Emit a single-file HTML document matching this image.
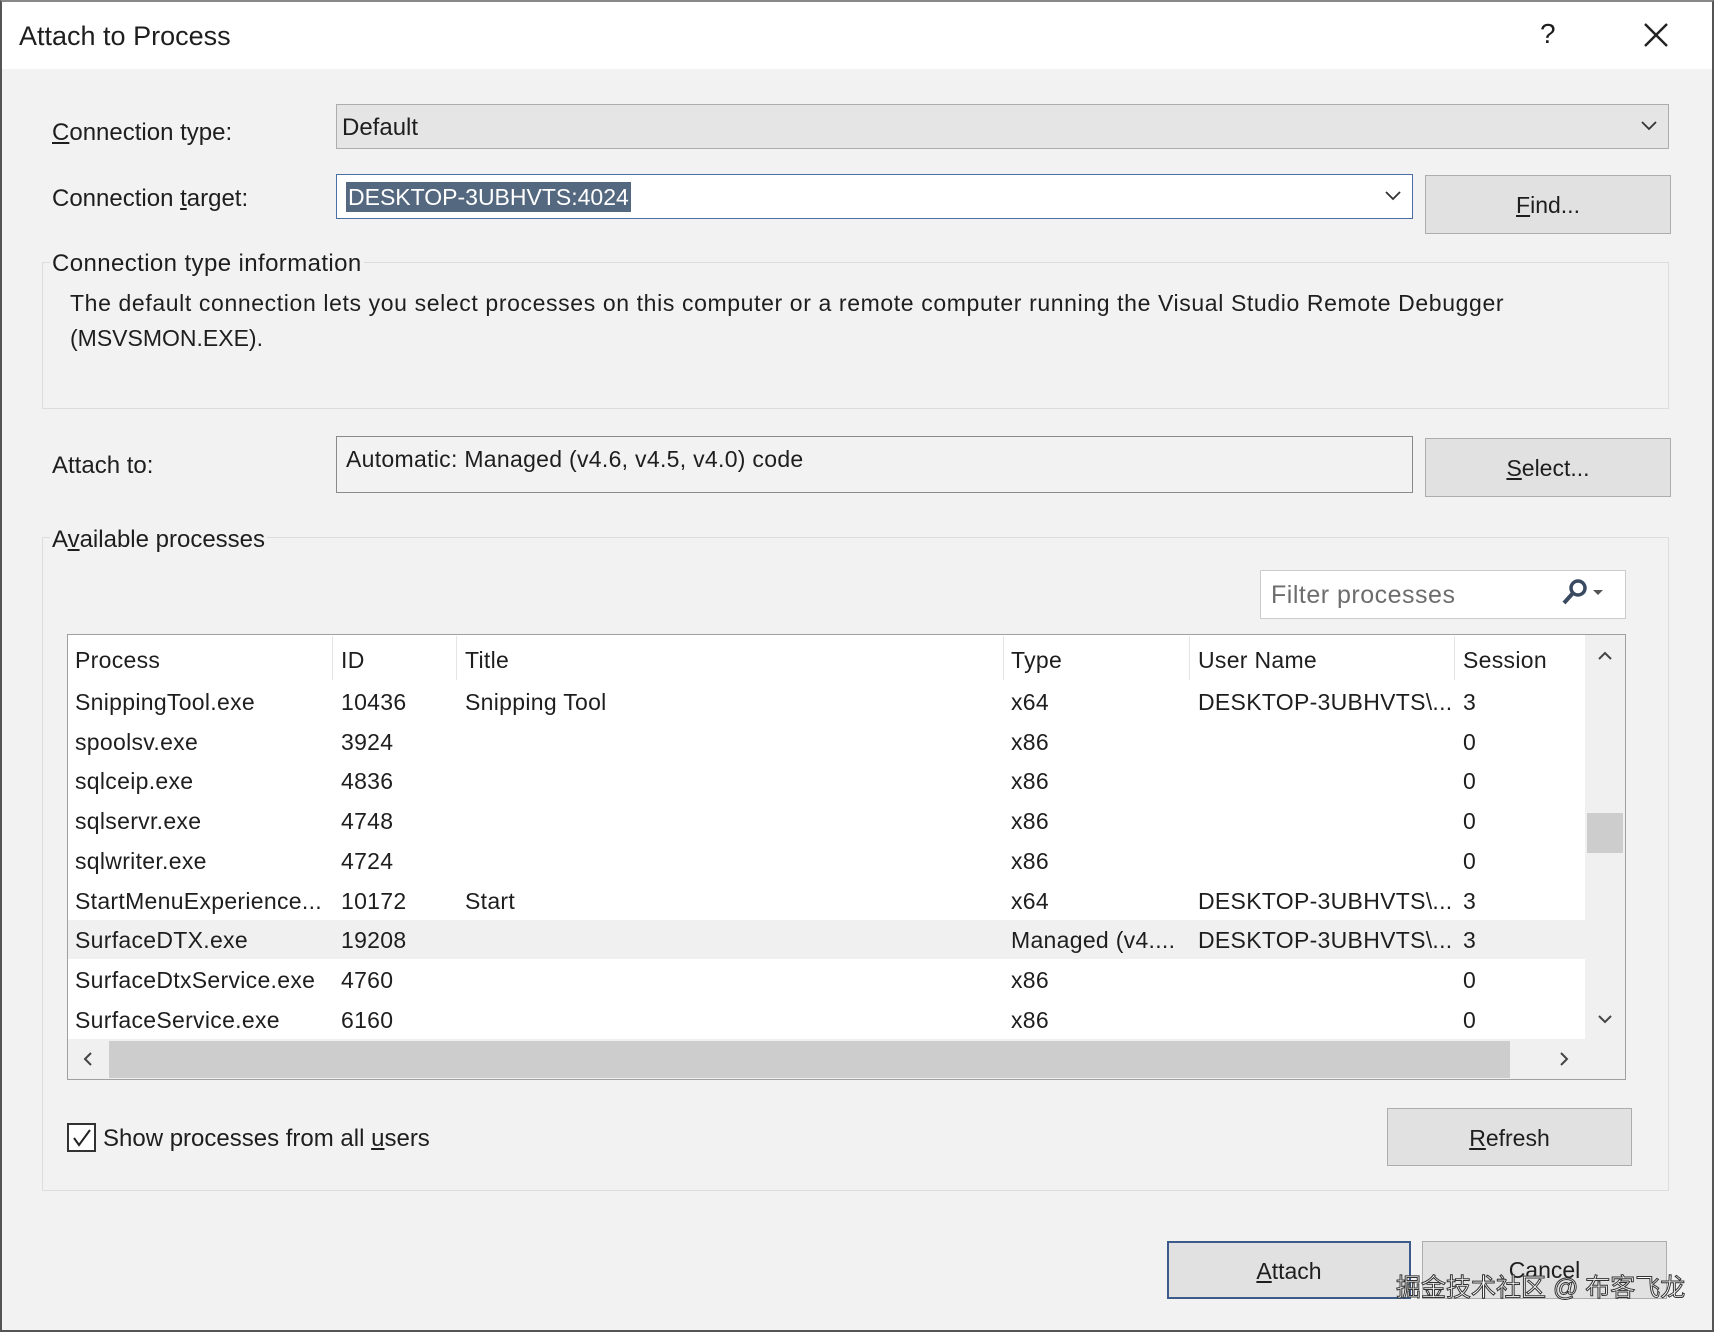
<!DOCTYPE html>
<html><head><meta charset="utf-8"><style>
*{box-sizing:border-box;margin:0;padding:0}
body{width:1714px;height:1332px;background:#f2f2f2;font-family:"Liberation Sans","Noto Sans CJK SC",sans-serif;color:#1e1e1e;font-size:23px;position:relative;overflow:hidden}
.a{position:absolute;white-space:nowrap}
.frame{position:absolute;left:0;top:0;width:1714px;height:1332px;border:2px solid #555;border-top-color:#888}
.title{position:absolute;left:2px;top:2px;width:1710px;height:67px;background:#fff}
.btn{position:absolute;background:#e1e1e1;border:1px solid #adadad;text-align:center;font-size:23px}
.box{position:absolute;border:1px solid #8a8a8a}
.grp{position:absolute;border:1px solid #dcdcdc}
u{text-decoration:underline}
</style></head><body>
<div class="title"></div>
<div class="a" style="left:19px;top:21px;font-size:27px">Attach to Process</div>
<div class="a" style="left:1540px;top:18px;font-size:28px">?</div>
<svg class="a" style="left:1643px;top:22px" width="26" height="26"><path d="M2 2L24 24M24 2L2 24" stroke="#222" stroke-width="2.4"/></svg>

<div class="a" style="left:52px;top:119px;font-size:24px"><u>C</u>onnection type:</div>
<div class="box" style="left:336px;top:104px;width:1333px;height:45px;background:#e5e5e5;border-color:#adadad"></div>
<div class="a" style="left:342px;top:114px;font-size:24px">Default</div>
<svg class="a" style="left:1640px;top:120px" width="18" height="12"><path d="M2 2L9 9L16 2" stroke="#333" stroke-width="1.8" fill="none"/></svg>

<div class="a" style="left:52px;top:185px;font-size:24px">Connection <u>t</u>arget:</div>
<div class="box" style="left:336px;top:174px;width:1077px;height:45px;background:#fff;border-color:#4a6fa5"></div>
<div class="a" style="left:346px;top:182px;height:30px;line-height:30px;padding:0 2px;background:#54687f;color:#fff;font-size:23px">DESKTOP-3UBHVTS:4024</div>
<svg class="a" style="left:1384px;top:190px" width="18" height="12"><path d="M2 2L9 9L16 2" stroke="#333" stroke-width="1.8" fill="none"/></svg>
<div class="btn" style="left:1425px;top:175px;width:246px;height:59px;line-height:59px"><u>F</u>ind...</div>

<div class="grp" style="left:42px;top:262px;width:1627px;height:147px"></div>
<div class="a" style="left:50px;top:250px;font-size:24px;background:#f2f2f2;padding:0 2px;letter-spacing:0.4px">Connection type information</div>
<div class="a" style="left:70px;top:290px;font-size:23px;letter-spacing:0.62px">The default connection lets you select processes on this computer or a remote computer running the Visual Studio Remote Debugger</div>
<div class="a" style="left:70px;top:325px;font-size:23px">(MSVSMON.EXE).</div>

<div class="a" style="left:52px;top:452px;font-size:24px">Attach to:</div>
<div class="box" style="left:336px;top:436px;width:1077px;height:57px;background:#f2f2f2;border-color:#8a8a8a"></div>
<div class="a" style="left:346px;top:446px;font-size:23px;letter-spacing:0.3px">Automatic: Managed (v4.6, v4.5, v4.0) code</div>
<div class="btn" style="left:1425px;top:438px;width:246px;height:59px;line-height:59px"><u>S</u>elect...</div>

<div class="grp" style="left:42px;top:537px;width:1627px;height:654px"></div>
<div class="a" style="left:50px;top:526px;font-size:24px;background:#f2f2f2;padding:0 2px">A<u>v</u>ailable processes</div>

<div class="box" style="left:1260px;top:570px;width:366px;height:49px;background:#fff;border-color:#ccc"></div>
<div class="a" style="left:1271px;top:581px;font-size:25px;color:#6d6d6d;letter-spacing:0.5px">Filter processes</div>
<svg class="a" style="left:1560px;top:578px" width="48" height="30"><circle cx="18" cy="10" r="7" stroke="#3a4a60" stroke-width="3.5" fill="none"/><path d="M13 15L4 25" stroke="#3a4a60" stroke-width="4"/><path d="M33 12L43 12L38 17Z" fill="#555"/></svg>

<div class="box" style="left:67px;top:634px;width:1559px;height:446px;background:#fff;border-color:#a0a0a0"></div>
<div style="position:absolute;left:68px;top:920px;width:1517px;height:39px;background:#f0f0f0"></div>
<div style="position:absolute;left:1585px;top:635px;width:40px;height:444px;background:#f0f0f0"></div>
<div style="position:absolute;left:1587px;top:813px;width:36px;height:40px;background:#cdcdcd"></div>
<svg class="a" style="left:1596px;top:650px" width="18" height="12"><path d="M3 9L9 3L15 9" stroke="#444" stroke-width="2" fill="none"/></svg>
<svg class="a" style="left:1596px;top:1013px" width="18" height="12"><path d="M3 3L9 9L15 3" stroke="#444" stroke-width="2" fill="none"/></svg>
<div style="position:absolute;left:68px;top:1039px;width:1517px;height:40px;background:#f0f0f0"></div>
<div style="position:absolute;left:109px;top:1041px;width:1401px;height:37px;background:#cdcdcd"></div>
<svg class="a" style="left:82px;top:1050px" width="12" height="18"><path d="M9 3L3 9L9 15" stroke="#444" stroke-width="2" fill="none"/></svg>
<svg class="a" style="left:1558px;top:1050px" width="12" height="18"><path d="M3 3L9 9L3 15" stroke="#444" stroke-width="2" fill="none"/></svg>
<div style="position:absolute;left:332px;top:636px;width:1px;height:44px;background:#e5e5e5"></div>
<div style="position:absolute;left:456px;top:636px;width:1px;height:44px;background:#e5e5e5"></div>
<div style="position:absolute;left:1003px;top:636px;width:1px;height:44px;background:#e5e5e5"></div>
<div style="position:absolute;left:1189px;top:636px;width:1px;height:44px;background:#e5e5e5"></div>
<div style="position:absolute;left:1454px;top:636px;width:1px;height:44px;background:#e5e5e5"></div>

<div id="rows"></div>

<div style="position:absolute;left:67px;top:1123px;width:29px;height:29px;border:2px solid #333;background:#fff"></div>
<svg class="a" style="left:70px;top:1126px" width="24" height="24"><path d="M4 12L9 19L20 4" stroke="#222" stroke-width="2" fill="none"/></svg>
<div class="a" style="left:103px;top:1125px;font-size:24px">Show processes from all <u>u</u>sers</div>
<div class="btn" style="left:1387px;top:1108px;width:245px;height:58px;line-height:58px"><u>R</u>efresh</div>

<div class="btn" style="left:1167px;top:1241px;width:244px;height:58px;line-height:56px;border:2px solid #3c5a8a"><u>A</u>ttach</div>
<div class="btn" style="left:1422px;top:1241px;width:245px;height:58px;line-height:56px">Cancel</div>
<div class="a" style="left:1396px;top:1268px;font-size:25px;color:#fff;-webkit-text-stroke:1px #333">掘金技术社区 @ 布客飞龙</div>

<div class="frame"></div>
<script>
var cols=[75,341,465,1011,1198,1463];
var data=[["Process","ID","Title","Type","User Name","Session"],
["SnippingTool.exe","10436","Snipping Tool","x64","DESKTOP-3UBHVTS\\...","3"],
["spoolsv.exe","3924","","x86","","0"],
["sqlceip.exe","4836","","x86","","0"],
["sqlservr.exe","4748","","x86","","0"],
["sqlwriter.exe","4724","","x86","","0"],
["StartMenuExperience...","10172","Start","x64","DESKTOP-3UBHVTS\\...","3"],
["SurfaceDTX.exe","19208","","Managed (v4....","DESKTOP-3UBHVTS\\...","3"],
["SurfaceDtxService.exe","4760","","x86","","0"],
["SurfaceService.exe","6160","","x86","","0"]];
var h="";
data.forEach(function(r,i){var y=i==0?647:689+(i-1)*39.7;
r.forEach(function(t,j){if(t)h+='<div class="a" style="left:'+cols[j]+'px;top:'+y+'px;font-size:23px;letter-spacing:0.3px">'+t.replace(/\\/g,"&#92;")+'</div>';});});
document.getElementById("rows").innerHTML=h;
</script>
</body></html>
